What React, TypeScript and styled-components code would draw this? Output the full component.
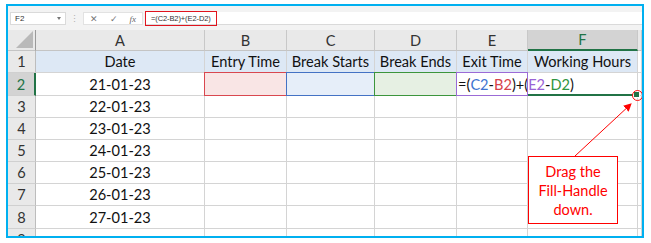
import styled, { createGlobalStyle } from 'styled-components';

const GlobalStyle = createGlobalStyle`
  body {
    margin: 0;
    background: #ffffff;
    font-family: Lato, "Open Sans", sans-serif;
  }
`;

const Page = styled.div`
  padding: 4px 0 0 6px;
`;

const Frame = styled.div`
  position: relative;
  width: 638px;
  height: 234px;
  box-sizing: border-box;
  border: 2px solid #00b0f0;
  overflow: hidden;
  background: #ffffff;
`;

const FormulaBar = styled.div`
  display: flex;
  align-items: flex-start;
  height: 24px;
  box-sizing: border-box;
  padding: 6px 0 0 2px;
  background: #f3f3f3;
  font-family: "Liberation Sans", Arial, sans-serif;
  font-size: 8px;
  color: #333;
`;

const NameBox = styled.div`
  display: flex;
  align-items: center;
  justify-content: space-between;
  width: 56px;
  height: 13px;
  box-sizing: border-box;
  padding: 0 4px;
  background: #ffffff;
  border: 1px solid #dadada;
`;

const Caret = styled.span`
  width: 0;
  height: 0;
  border-left: 2.5px solid transparent;
  border-right: 2.5px solid transparent;
  border-top: 3px solid #777;
`;

const Grip = styled.div`
  width: 17px;
  height: 13px;
  display: flex;
  align-items: center;
  justify-content: center;
  color: #b0b0b0;
  font-size: 9px;
`;

const FnBox = styled.div`
  display: flex;
  align-items: center;
  justify-content: space-around;
  width: 60px;
  height: 13px;
  box-sizing: border-box;
  background: #ffffff;
  border: 1px solid #e2e2e2;
  color: #777;
  font-size: 9px;
`;

const Fx = styled.span`
  font-family: "Liberation Serif", serif;
  font-style: italic;
  font-size: 9px;
  color: #666;
`;

const FormulaInput = styled.div`
  flex: 1;
  height: 13px;
  margin-left: 2px;
  box-sizing: border-box;
  background: #ffffff;
  border-bottom: 1px solid #dadada;
`;

const FormulaText = styled.div`
  display: inline-flex;
  align-items: center;
  width: 72px;
  height: 15px;
  margin-top: -1px;
  box-sizing: border-box;
  padding-left: 5px;
  border: 1.5px solid #e0141e;
  font-size: 7.5px;
  letter-spacing: -0.1px;
  white-space: nowrap;
  color: #333;
`;

const Grid = styled.div`
  display: grid;
  grid-template-columns: 28px 169px 82px 88px 82px 71px 110px 4px;
  grid-template-rows: 21px 22px 23px 22px 22px 22px 22px 22px 23px 22px;
  font-size: 14.6px;
  color: #111;
`;

const Corner = styled.div`
  position: relative;
  background: #e9e9e9;
  border-right: 1px solid #9a9a9a;
  border-bottom: 1px solid #c4c4c4;

  &::after {
    content: '';
    position: absolute;
    right: 2px;
    bottom: 2px;
    border-left: 17px solid transparent;
    border-bottom: 17px solid #b9b9b9;
  }
`;

const ColHead = styled.div<{ $active?: boolean }>`
  display: flex;
  align-items: center;
  justify-content: center;
  background: ${(p) => (p.$active ? '#d3d3d3' : '#e9e9e9')};
  color: ${(p) => (p.$active ? '#217346' : '#333')};
  border-right: 1px solid #c8c8c8;
  border-bottom: ${(p) => (p.$active ? '2px solid #217346' : '1px solid #c4c4c4')};
  box-sizing: border-box;
`;

const RowHead = styled.div<{ $active?: boolean }>`
  display: flex;
  align-items: center;
  justify-content: center;
  background: ${(p) => (p.$active ? '#d3d3d3' : '#e9e9e9')};
  color: ${(p) => (p.$active ? '#217346' : '#333')};
  border-right: ${(p) => (p.$active ? '2px solid #217346' : '1px solid #bdbdbd')};
  border-bottom: 1px solid #d0d0d0;
  box-sizing: border-box;
`;

const Cell = styled.div<{ $title?: boolean; $fill?: string; $ring?: string; $left?: boolean }>`
  position: relative;
  display: flex;
  align-items: center;
  justify-content: ${(p) => (p.$left ? 'flex-start' : 'center')};
  padding-left: ${(p) => (p.$left ? '1px' : '0')};
  white-space: nowrap;
  background: ${(p) => p.$fill ?? (p.$title ? '#dde8f5' : 'transparent')};
  border-right: 1px solid #d4d4d4;
  border-bottom: 1px solid #d4d4d4;
  box-sizing: border-box;
  z-index: ${(p) => (p.$left ? 2 : 'auto')};

  ${(p) =>
    p.$ring &&
    `
    &::after {
      content: '';
      position: absolute;
      inset: -1px -1px -1px -1px;
      border: 1.5px solid ${p.$ring};
      pointer-events: none;
      z-index: 1;
    }
  `}
`;

const ActiveCell = styled.div`
  position: relative;
  border-right: 1px solid #d4d4d4;
  border-bottom: 2px solid #217346;
  box-sizing: border-box;
`;

const Handle = styled.span`
  position: absolute;
  right: -3px;
  bottom: -4px;
  width: 5px;
  height: 5px;
  background: #217346;
  border: 1px solid #ffffff;
  z-index: 3;
`;

const HandleRing = styled.span`
  position: absolute;
  right: -6px;
  bottom: -7px;
  width: 11px;
  height: 11px;
  box-sizing: border-box;
  border: 1px solid #ff1010;
  border-radius: 50%;
  z-index: 4;
`;

const Ref = styled.span<{ $c: string }>`
  color: ${(p) => p.$c};
`;

const Callout = styled.div`
  position: absolute;
  left: 520px;
  top: 150px;
  width: 90px;
  height: 68px;
  box-sizing: border-box;
  display: flex;
  align-items: center;
  justify-content: center;
  text-align: center;
  background: #ffffff;
  border: 1px solid #ff0000;
  color: #ff0000;
  font-size: 14.5px;
  line-height: 19px;
  z-index: 5;
`;

const Arrow = styled.svg`
  position: absolute;
  left: 0;
  top: 0;
  z-index: 5;
  pointer-events: none;
`;

const dates = ['21-01-23', '22-01-23', '23-01-23', '24-01-23', '25-01-23', '26-01-23', '27-01-23'];
const titles = ['Date', 'Entry Time', 'Break Starts', 'Break Ends', 'Exit Time', 'Working Hours'];
const letters = ['A', 'B', 'C', 'D', 'E', 'F'];

export default function App() {
  return (
    <>
      <GlobalStyle />
      <Page>
        <Frame>
          <FormulaBar>
            <NameBox>
              <span>F2</span>
              <Caret />
            </NameBox>
            <Grip>⋮</Grip>
            <FnBox>
              <span>✕</span>
              <span>✓</span>
              <Fx>fx</Fx>
            </FnBox>
            <FormulaInput>
              <FormulaText>=(C2-B2)+(E2-D2)</FormulaText>
            </FormulaInput>
          </FormulaBar>

          <Grid>
            <Corner />
            {letters.map((l) => (
              <ColHead key={l} $active={l === 'F'}>
                {l}
              </ColHead>
            ))}
            <ColHead />

            <RowHead>1</RowHead>
            {titles.map((t) => (
              <Cell key={t} $title>
                {t}
              </Cell>
            ))}
            <Cell />

            <RowHead $active>2</RowHead>
            <Cell>{dates[0]}</Cell>
            <Cell $fill="#f9e5e5" $ring="#d9474f" />
            <Cell $fill="#e6eef9" $ring="#4472c4" />
            <Cell $fill="#e6f0e3" $ring="#3c953c" />
            <Cell $left $ring="#9b6bd6">
              {'=('}<Ref $c="#3f74d0">C2</Ref>{'-'}<Ref $c="#d6424a">B2</Ref>{')+('}<Ref $c="#9a63d6">E2</Ref>{'-'}<Ref $c="#2f9540">D2</Ref>{')'}
            </Cell>
            <ActiveCell>
              <Handle />
              <HandleRing />
            </ActiveCell>
            <Cell />

            {dates.slice(1).map((d, i) => (
              <>
                <RowHead key={`h${i}`}>{i + 3}</RowHead>
                <Cell key={`a${i}`}>{d}</Cell>
                <Cell key={`b${i}`} />
                <Cell key={`c${i}`} />
                <Cell key={`d${i}`} />
                <Cell key={`e${i}`} />
                <Cell key={`f${i}`} />
                <Cell key={`g${i}`} />
              </>
            ))}

            <RowHead>9</RowHead>
            <Cell />
            <Cell />
            <Cell />
            <Cell />
            <Cell />
            <Cell />
            <Cell />
          </Grid>

          <Callout>
            Drag the
            <br />
            Fill-Handle
            <br />
            down.
          </Callout>

          <Arrow width="634" height="230" viewBox="0 0 634 230">
            <defs>
              <marker id="head" markerWidth="8" markerHeight="8" refX="7" refY="4" orient="auto" markerUnits="userSpaceOnUse">
                <path d="M0,0 L8,4 L0,8 Z" fill="#ff0000" />
              </marker>
            </defs>
            <line x1="567" y1="150" x2="623" y2="98" stroke="#ff0000" strokeWidth="1" markerEnd="url(#head)" />
          </Arrow>
        </Frame>
      </Page>
    </>
  );
}
